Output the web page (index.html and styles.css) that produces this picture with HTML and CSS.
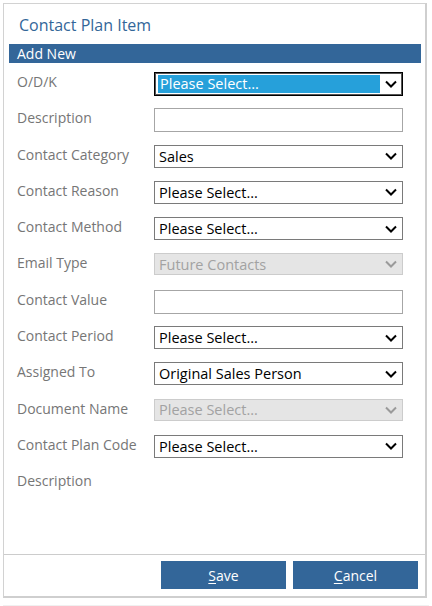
FILE: index.html
```html
<!DOCTYPE html>
<html>
<head>
<meta charset="utf-8">
<link rel="stylesheet" href="styles.css">
</head>
<body>
<div class="frame">
  <div class="title">Contact Plan Item</div>
  <div class="bar">Add New</div>
  <div class="form">
    <div class="row">
      <div class="label">O/D/K</div>
      <div class="select focused"><span class="hl">Please Select...</span><svg class="chev" width="12" height="8" viewBox="0 0 12 8"><path d="M1 1.5 L6 6.5 L11 1.5" fill="none" stroke="#000" stroke-width="2"/></svg></div>
    </div>
    <div class="row">
      <div class="label">Description</div>
      <div class="input"></div>
    </div>
    <div class="row">
      <div class="label">Contact Category</div>
      <div class="select"><span>Sales</span><svg class="chev" width="12" height="8" viewBox="0 0 12 8"><path d="M1 1.5 L6 6.5 L11 1.5" fill="none" stroke="#000" stroke-width="2"/></svg></div>
    </div>
    <div class="row">
      <div class="label">Contact Reason</div>
      <div class="select"><span>Please Select...</span><svg class="chev" width="12" height="8" viewBox="0 0 12 8"><path d="M1 1.5 L6 6.5 L11 1.5" fill="none" stroke="#000" stroke-width="2"/></svg></div>
    </div>
    <div class="row">
      <div class="label">Contact Method</div>
      <div class="select"><span>Please Select...</span><svg class="chev" width="12" height="8" viewBox="0 0 12 8"><path d="M1 1.5 L6 6.5 L11 1.5" fill="none" stroke="#000" stroke-width="2"/></svg></div>
    </div>
    <div class="row">
      <div class="label">Email Type</div>
      <div class="select disabled"><span>Future Contacts</span><svg class="chev" width="12" height="8" viewBox="0 0 12 8"><path d="M1 1.5 L6 6.5 L11 1.5" fill="none" stroke="#9a9a9a" stroke-width="2"/></svg></div>
    </div>
    <div class="row">
      <div class="label">Contact Value</div>
      <div class="input"></div>
    </div>
    <div class="row">
      <div class="label">Contact Period</div>
      <div class="select"><span>Please Select...</span><svg class="chev" width="12" height="8" viewBox="0 0 12 8"><path d="M1 1.5 L6 6.5 L11 1.5" fill="none" stroke="#000" stroke-width="2"/></svg></div>
    </div>
    <div class="row">
      <div class="label">Assigned To</div>
      <div class="select"><span>Original Sales Person</span><svg class="chev" width="12" height="8" viewBox="0 0 12 8"><path d="M1 1.5 L6 6.5 L11 1.5" fill="none" stroke="#000" stroke-width="2"/></svg></div>
    </div>
    <div class="row">
      <div class="label">Document Name</div>
      <div class="select disabled"><span>Please Select...</span><svg class="chev" width="12" height="8" viewBox="0 0 12 8"><path d="M1 1.5 L6 6.5 L11 1.5" fill="none" stroke="#9a9a9a" stroke-width="2"/></svg></div>
    </div>
    <div class="row">
      <div class="label">Contact Plan Code</div>
      <div class="select"><span>Please Select...</span><svg class="chev" width="12" height="8" viewBox="0 0 12 8"><path d="M1 1.5 L6 6.5 L11 1.5" fill="none" stroke="#000" stroke-width="2"/></svg></div>
    </div>
    <div class="row">
      <div class="label">Description</div>
    </div>
  </div>
  <div class="footer">
    <button class="btn"><u>S</u>ave</button>
    <button class="btn"><u>C</u>ancel</button>
  </div>
</div>
<div class="pageline"></div>
</body>
</html>
```

FILE: styles.css
```css
* { box-sizing: border-box; }
html, body { margin: 0; padding: 0; background: #fff; }
body {
  font-family: "Open Sans", "Noto Sans", sans-serif;
  font-size: 14px;
  padding: 3px 0 0 3px;
}
.frame {
  width: 424px;
  height: 595px;
  border: 1px solid #d2d2d2;
  border-right: 2px solid #cfcfcf;
  border-bottom: 2px solid #cfcfcf;
  display: flex;
  flex-direction: column;
}
.title {
  color: #336699;
  font-size: 16px;
  height: 40px;
  padding: 11px 0 0 15px;
  line-height: 20px;
}
.bar {
  background: #336699;
  color: #fff;
  margin: 0 4px 0 5px;
  height: 19px;
  line-height: 19px;
  padding-left: 8px;
  font-size: 14px;
}
.form {
  flex: 1;
  padding: 9px 0 0 13px;
}
.row {
  display: flex;
  height: 36.3px;
  align-items: flex-start;
}
.label {
  width: 137px;
  color: #767676;
  line-height: 20px;
  margin-top: 0;
}
.select, .input {
  width: 249px;
  height: 23px;
  border: 1px solid #7a7a7a;
  display: flex;
  align-items: center;
  justify-content: space-between;
  padding: 0 4px 0 4px;
  color: #000;
  font-size: 14.5px;
  position: relative;
}
.input {
  height: 24px;
  border-color: #a6a6a6;
}
.select.focused {
  height: 24px;
  border: 1px solid #000;
  box-shadow: inset 0 0 0 1px #555;
  padding: 0 4px 0 3px;
}
.select.focused .hl {
  background: #26a0da;
  color: #fff;
  width: 222px;
  height: 18px;
  line-height: 18px;
  padding-left: 2px;
}
.select.disabled {
  background: #e5e5e5;
  border-color: #cccccc;
  color: #a2a2a2;
  height: 22px;
}
.chev { flex: none; margin-right: 1px; }
.footer {
  height: 42px;
  border-top: 1px solid #cccccc;
  display: flex;
  justify-content: flex-end;
  align-items: flex-start;
  gap: 7px;
  padding: 6px 7px 0 0;
}
.btn {
  width: 125px;
  height: 28px;
  background: #336699;
  color: #fff;
  border: none;
  font-family: "Open Sans", "Noto Sans", sans-serif;
  font-size: 14px;
  padding: 0;
}
.btn u { text-decoration-thickness: 1px; text-underline-offset: 2px; }
.pageline {
  height: 1px;
  background: #f0f0f0;
  margin-top: 7px;
  width: 426px;
}
```
